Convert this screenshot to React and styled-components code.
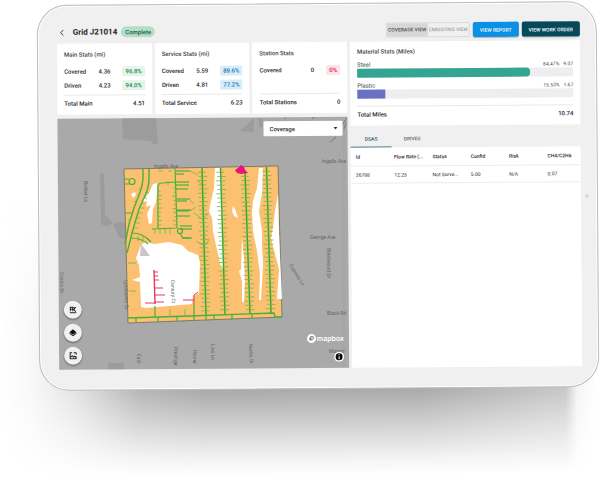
import React from "react";
import styled, { createGlobalStyle } from "styled-components";
import { ChevronLeft } from "lucide-react";

const GlobalStyle = createGlobalStyle`
  *, *::before, *::after { box-sizing: border-box; }
  body {
    margin: 0;
    background: #fff;
    color: #22262a;
    font-family: Roboto, "Liberation Sans", sans-serif;
    font-size: 6px;
    line-height: 8px;
    overflow: hidden;
  }
  button, select { font: inherit; color: inherit; margin: 0; }
  h1, h2, dl, dd { margin: 0; }
`;

const Stage = styled.div`
  padding: 3px 2px 97px 38px;
`;

const Device = styled.div`
  position: relative;
  transform: rotate(-0.4deg);
`;

const Shadow = styled.div`
  position: absolute;
  top: 50%;
  right: -2px;
  bottom: -86px;
  left: -38px;
  background: linear-gradient(to bottom, transparent 0, #a8a8a8 50%, #acacac 70%, #d4d4d4 83%, #f3f3f3 94%, #fff 100%);
  mask-image: linear-gradient(to right, transparent 0, rgba(0, 0, 0, 0.08) 5%, rgba(0, 0, 0, 0.3) 12%, rgba(0, 0, 0, 0.85) 23%, #000 34%, #000 70%, rgba(0, 0, 0, 0.65) 94%, rgba(0, 0, 0, 0.12) 96%, transparent 99%);
`;

const Screen = styled.main`
  position: relative;
  padding: 19px 16px 20px 19px;
  border: 1px solid #bcbcbc;
  border-radius: 30px;
  background: #f0f0f1;
  box-shadow: inset 0 0 0 1px #fff;
`;

const Camera = styled.span`
  position: absolute;
  top: 50%;
  right: 8px;
  width: 4px;
  height: 4px;
  border-radius: 50%;
  background: #d9d9db;
`;

const Header = styled.header`
  display: flex;
  align-items: center;
  gap: 4px;
  height: 15px;
  margin-bottom: 4px;
`;

const BackButton = styled.button`
  display: flex;
  padding: 0;
  border: 0;
  background: none;
  margin: 0 2px 0 0;
  svg { width: 10px; height: 10px; }
`;

const Title = styled.h1`
  font-size: 8px;
  line-height: 10px;
  font-weight: 700;
`;

const StatusChip = styled.span`
  padding: 0 4px;
  border-radius: 6px;
  background: #b4dfc6;
  color: #23543b;
  font-size: 6px;
  line-height: 11px;
  font-weight: 500;
`;

const Actions = styled.div`
  display: flex;
  gap: 3px;
  margin-left: auto;
`;

const Toggle = styled.div`
  display: flex;
  border: 1px solid #d9dadb;
  border-radius: 2px;
`;

const ToggleButton = styled.button`
  width: 41px;
  padding: 0;
  border: 0;
  background: ${(p) => (p.$on ? "#d6d7d8" : "transparent")};
  color: ${(p) => (p.$on ? "#4b4f52" : "#8b8e91")};
  font-size: 5px;
  line-height: 13px;
  font-weight: ${(p) => (p.$on ? 500 : 400)};
  white-space: nowrap;
`;

const ActionButton = styled.button`
  height: 15px;
  padding: 0 7px;
  border: 0;
  border-radius: 2px;
  background: ${(p) => (p.$dark ? "#06495a" : "#0a90e4")};
  color: #fff;
  font-size: 5px;
  font-weight: 500;
  box-shadow: 0 1px 1px rgba(0, 0, 0, 0.25);
  white-space: nowrap;
`;

const Columns = styled.div`
  display: grid;
  grid-template-columns: 290fr 230fr;
  gap: 3px;
`;

const LeftColumn = styled.div`
  display: flex;
  flex-direction: column;
  gap: 4px;
  min-width: 0;
`;

const RightColumn = styled.div`
  display: flex;
  flex-direction: column;
  min-width: 0;
`;

const StatsGrid = styled.div`
  display: grid;
  grid-template-columns: repeat(3, 1fr);
  gap: 3px;
`;

const Card = styled.section`
  padding: 7px;
  border-radius: 1px;
  background: #fff;
`;

const CardTitle = styled.h2`
  margin-bottom: ${(p) => p.$gap}px;
  color: #3d4246;
  font-size: 6px;
  line-height: 8px;
  font-weight: 500;
`;

const Rows = styled.dl`
  display: flex;
  flex-direction: column;
  gap: 4px;
  min-height: 24px;
`;

const Row = styled.div`
  display: flex;
  align-items: center;
  height: 10px;
  gap: 12px;
  dt { flex: 1; font-weight: 500; }
`;

const Value = styled.dd`
  font-weight: 500;
`;

const chipTones = {
  green: ["#e3f5e9", "#2a8550"],
  blue: ["#d6edfb", "#1f6d9c"],
  red: ["#fde3e8", "#d2264d"],
};

const Percent = styled.dd`
  padding: 0 3px;
  border-radius: 1px;
  background: ${(p) => chipTones[p.$tone][0]};
  color: ${(p) => chipTones[p.$tone][1]};
  line-height: 10px;
  font-weight: 500;
`;

const Total = styled.div`
  display: flex;
  justify-content: space-between;
  margin-top: ${(p) => p.$gap}px;
  padding-top: 4px;
  border-top: 1px solid #e8e9ea;
  font-weight: 500;
`;

const MaterialCard = styled(Card)`
  padding-top: 6px;
`;

const Material = styled.div`
  & + & { margin-top: 4px; }
`;

const MaterialLabel = styled.div`
  display: flex;
  gap: 4px;
  color: #44484c;
  font-size: 5px;
  span:first-child { flex: 1; font-size: 6px; }
`;

const Track = styled.div`
  height: 9px;
  background: #eeeef0;
`;

const Fill = styled.div`
  width: ${(p) => p.$width};
  height: 100%;
  border-radius: ${(p) => (p.$round ? "0 4px 4px 0" : "0")};
  background: ${(p) => p.$color};
`;

const Tabs = styled.div`
  display: flex;
  height: 22px;
`;

const Tab = styled.button`
  width: 41px;
  padding: 4px 0 0;
  border: 0;
  border-bottom: 1px solid ${(p) => (p.$on ? "#17646a" : "transparent")};
  background: none;
  color: ${(p) => (p.$on ? "#17646a" : "#64696d")};
  font-size: 5px;
  font-weight: 500;
`;

const TablePanel = styled.div`
  flex: 1;
  background: #fff;
`;

const Table = styled.table`
  width: 100%;
  table-layout: fixed;
  border-collapse: collapse;
  font-size: 5px;
  th, td {
    height: 17px;
    padding: 0 0 0 5px;
    border-bottom: 1px solid #ebeced;
    text-align: left;
    white-space: nowrap;
  }
  th { height: 18px; font-weight: 500; }
`;

const MapPanel = styled.section`
  position: relative;
  flex: 1;
  min-height: 251px;
  overflow: hidden;
  background: #a9a9a9;
`;

const MapDrawing = styled.svg`
  position: absolute;
  inset: 0;
  width: 100%;
  height: 100%;
`;

const LayerPicker = styled.label`
  position: absolute;
  top: 4px;
  right: 5px;
  width: 79px;
  select {
    display: block;
    width: 100%;
    height: 15px;
    padding: 0 6px;
    border: 0;
    border-radius: 1px;
    appearance: none;
    background: #fff;
    font-weight: 500;
  }
  svg {
    position: absolute;
    top: 6px;
    right: 5px;
    width: 4px;
    height: 3px;
    pointer-events: none;
  }
`;

const MapTools = styled.div`
  position: absolute;
  bottom: 5px;
  left: 5px;
  display: flex;
  flex-direction: column;
  gap: 5px;
`;

const MapTool = styled.button`
  display: grid;
  place-items: center;
  width: 18px;
  height: 18px;
  padding: 0;
  border: 0;
  border-radius: 50%;
  background: #f1f1f1;
  box-shadow: 0 1px 2px rgba(0, 0, 0, 0.45);
  svg { width: 8px; height: 8px; }
`;

const Attribution = styled.div`
  position: absolute;
  right: 5px;
  bottom: 6px;
  display: flex;
  flex-direction: column;
  align-items: flex-end;
  gap: 9px;
`;

const Logo = styled.a`
  display: flex;
  align-items: center;
  gap: 1px;
  color: #fff;
  font-family: Inter, sans-serif;
  font-size: 7px;
  line-height: 9px;
  font-weight: 600;
  text-decoration: none;
  svg { width: 9px; height: 9px; }
`;

const InfoButton = styled.button`
  display: flex;
  padding: 0;
  border: 0;
  background: none;
  svg { width: 10px; height: 10px; }
`;

/* Service lines branching off a main, evenly spaced along it. */
function ticks(x1, y1, x2, y2, step, left, right) {
  const n = Math.floor(Math.abs(y2 - y1) / step);
  let d = "";
  for (let i = 1; i < n; i++) {
    const t = i / n;
    const x = x1 + (x2 - x1) * t;
    const y = y1 + (y2 - y1) * t;
    const l = left ? left - (i % 3) * 0.7 : 0;
    const r = right ? right - ((i + 1) % 3) * 0.7 : 0;
    d += `M${x - l} ${y}H${x + r}`;
  }
  return d;
}

const mains = [
  [202, 167, 206, 314],
  [220.5, 167, 225, 313],
  [245, 171, 250, 313],
  [266.5, 166, 271, 312],
];

const gaps = [
  "M141 244l4-3 9 2 15-2 13 3 6 6 10 4 2 8-1 30-6 3-1 8-46 4-5-1-1-25-8-2 8-3-1-12-3-7z",
  "M153 183l4-1v9l-1 10-3 7-1 14-3 1-2-10 4-9-5 2 1-6-6 2 9-12z",
  "M131 193l4-2 1 3-3 3z",
  "M215 167h6l1 30 1 40v30h-2l-3-14-3-13-2-10-1-13-3-7 2-10 3-13z",
  "M233 205l2 3 3 9-4-2-2-5z",
  "M242 236l2 20 1 24-1 22-2-2 0-20-3-10 2-2z",
  "M259 167h4l-1 26-3 17 3 20 0 15 1 18-1 20-1 16h-2l1-26-3-23-4-20-1-17 1-13 4-13z",
  "M278 193l1 40 3 65h-5l2-30-3-11-5-20 2-11 2-16z",
];

const sideLines = [
  [176, 170, 14], [176, 173, 8], [176, 181, 13], [176, 184, 13], [176, 188, 12], [177, 198, 13],
  [177, 200, 10], [177, 209, 14], [177, 210, 12], [177, 215, 13], [180, 225, 12], [180, 228, 12], [182, 237, 10],
];

const labels = [
  ["Ingalls Ave", 154, 167, 0],
  ["Ingalls Ave", 322, 162, 0],
  ["George Ave", 310, 238, 0],
  ["Black Rd", 327, 314, 0],
  ["Maroni", 329, 352, 0],
  ["Barber Ln", 84, 180, 90],
  ["Brentwood Dr", 327, 247, 90],
  ["Cypress Ln", 289, 264, 58],
  ["Cassia Dr", 60, 271, 90],
  ["Lynnhaven Dr", 124, 279, 88],
  ["Fairl", 137, 353, 90],
  ["Prestige", 174, 346, 90],
  ["Home", 193, 349, 90],
  ["Lisa Ln", 211, 343, 90],
  ["Banks Dr", 249, 343, 88],
  ["Century Ct", 171, 279, 88],
];

function SurveyMap() {
  return (
    <MapDrawing viewBox="58 116 290 251" preserveAspectRatio="xMidYMid slice" role="img" aria-label="Coverage map">
      <g transform="rotate(0.4 318 196)">
        <g fill="#9c9c9c">
          <path d="M122 117h34l2 26h-5l-3-3-27-2z" />
          <path d="M100 172h4l1 42 8 8-7 4-5-3z" />
          <path d="M113 223l6-2 6 1v16l-6-2z" />
          <path d="M240 130l14-13v14z" />
          <path d="M108 362h16v8h-16z" />
          <path d="M258 117h4l1 8-3 3z" />
        </g>
        <path d="M344 115v255" stroke="#a3a3a3" fill="none" />
        <path d="M284 118l2-2M312 118l2-2M342 124l5-7M330 141l6-5M346 122l-2 6" stroke="#777" fill="none" />
        <path d="M124 168L278 165 282 316 128 322z" fill="#fbc070" stroke="#5b6358" strokeWidth="0.7" />
        {gaps.map((d) => <path key={d} d={d} fill="#fff" />)}
        <path d="M141 243l4 5 5 7-10 0z" fill="#ccc6cb" />
        <g fill="none" stroke="#45b13a" strokeWidth="1.2">
          {mains.map(([a, b, c, d]) => <path key={a} d={`M${a} ${b}L${c} ${d}`} stroke="#2ba52d" strokeWidth="1.4" />)}
          <path d="M128 317L190 315 274 312l1 4h7" strokeWidth="1.4" />
          <path d="M136 317v4M158 316v5M177 315v5M194 302v18M206 314v6M214 314v5M232 313v6M252 312v6" />
          <path d="M143 168v8q0 8-4 18l-5 13-5 16-4 20M149 168v10q0 8-4 17l-6 13-7 24-5 20" strokeWidth="1.4" />
          <path d="M124 178h5M124 183h5M124 212h9M132 232q11 0 19 9M131 237q10 0 17 6" />
          <circle cx="132" cy="180.500" r="3" />
          <path d="M158 228l0-42q0-4 4-4l14-1M175 167l2 60M152 228l25-1M155 305v11M180 233l3 4h7" />
          <circle cx="180" cy="230" r="2.500" />
        </g>
        <g fill="none" stroke="#6bba45" strokeWidth="0.8">
          {mains.map(([a, b, c, d]) => <path key={a} d={ticks(a, b, c, d, 4.2, 5, 5)} />)}
          <path d={ticks(158, 186, 158, 228, 4, 0, 4)} />
          <path d={ticks(176, 183, 177, 228, 4, 4, 0)} />
          <path d={ticks(148, 182, 133, 232, 5, 0, 4)} />
          <path d={ticks(143, 182, 129, 225, 6, 3, 0)} />
          <path d="M128 262h8M129 290h7M155 228v5M160 228v5M165 228v5M170 228v5M138 235v5M143 236v5M168 180v4M168 170h4M158 170h5" />
          <path d="M170 308v8M185 308v8M190 199l4 4M190 210l6-4M190 170l8 4M198 180l4 4M194 212l8 6 6-5M196 240l8 5 5-6" />
        </g>
        <g fill="none" stroke="#27ad33" strokeWidth="1.200">
          {sideLines.map(([x, y, w]) => <path key={`${x}-${y}`} d={`M${x} ${y}h${w}`} />)}
        </g>
        <g fill="none" stroke="#e23a63" strokeWidth="1">
          <path d="M154 269l1 34" strokeWidth="1.400" />
          <path d="M154 271h4M154 275h4M154 279h5M155 287h8M155 294h10M155 301h9M145 302h10M183 299h11M194 302v-8l4-3" />
        </g>
        <path d="M235 169l3-2 3-3 3 2 1 3 3 3-7 1-4-1z" fill="#e7147c" />
        <g fill="#666" fontFamily="Roboto, sans-serif" fontSize="5">
          {labels.map(([text, x, y, r]) => (
            <text key={`${text}${x}`} transform={`translate(${x} ${y}) rotate(${r})`}>{text}</text>
          ))}
        </g>
      </g>
    </MapDrawing>
  );
}

const stats = [
  { title: "Main Stats (mi)", tone: "green", rows: [["Covered", "4.36", "96.8%"], ["Driven", "4.23", "94.0%"]], total: ["Total Main", "4.51"] },
  { title: "Service Stats (mi)", tone: "blue", rows: [["Covered", "5.59", "89.6%"], ["Driven", "4.81", "77.2%"]], total: ["Total Service", "6.23"] },
  { title: "Station Stats", tone: "red", rows: [["Covered", "0", "0%"]], total: ["Total Stations", "0"] },
];

const materials = [
  { name: "Steel", percent: "84.47%", miles: "9.07", width: "80%", color: "#35a593", round: true },
  { name: "Plastic", percent: "15.53%", miles: "1.67", width: "13%", color: "#6a70c4" },
];

const headings = ["Id", "Flow Rate (...", "Status", "Confid", "Risk", "CH4/C2H6"];
const reading = ["36788", "12.25", "Not Surve...", "5.00", "N/A", "0.07"];

export default function App() {
  return (
    <Stage>
      <GlobalStyle />
      <Device>
        <Shadow />
        <Screen>
          <Header>
            <BackButton aria-label="Back"><ChevronLeft strokeWidth={2} /></BackButton>
            <Title>Grid J21014</Title>
            <StatusChip>Complete</StatusChip>
            <Actions>
              <Toggle>
                <ToggleButton $on aria-pressed="true">COVERAGE VIEW</ToggleButton>
                <ToggleButton aria-pressed="false">EMISSIONS VIEW</ToggleButton>
              </Toggle>
              <ActionButton>VIEW REPORT</ActionButton>
              <ActionButton $dark>VIEW WORK ORDER</ActionButton>
            </Actions>
          </Header>
          <Columns>
            <LeftColumn>
              <StatsGrid>
                {stats.map((s) => (
                  <Card key={s.title}>
                    <CardTitle $gap={8}>{s.title}</CardTitle>
                    <Rows>
                      {s.rows.map(([name, value, percent]) => (
                        <Row key={name}>
                          <dt>{name}</dt>
                          <Value>{value}</Value>
                          <Percent $tone={s.tone}>{percent}</Percent>
                        </Row>
                      ))}
                    </Rows>
                    <Total $gap={4}><span>{s.total[0]}</span><span>{s.total[1]}</span></Total>
                  </Card>
                ))}
              </StatsGrid>
              <MapPanel>
                <SurveyMap />
                <LayerPicker>
                  <select aria-label="Map layer" defaultValue="Coverage"><option>Coverage</option></select>
                  <svg viewBox="0 0 4 3"><path d="M0 0h4L2 2.500z" fill="#333" /></svg>
                </LayerPicker>
                <MapTools>
                  <MapTool aria-label="Routes">
                    <svg viewBox="0 0 16 16" fill="none" stroke="#222" strokeWidth="2"><path d="M2 14h13M3 11V3h5v8M3 7h5M8 4h5l-3 4 4 4" /></svg>
                  </MapTool>
                  <MapTool aria-label="Layers">
                    <svg viewBox="0 0 16 16" fill="#111"><path d="M8 1l7 6-7 5-7-5z" /><path d="M1 10l7 5 7-5v-2l-7 5-7-5z" /></svg>
                  </MapTool>
                  <MapTool aria-label="Image overlay">
                    <svg viewBox="0 0 16 16" fill="none" stroke="#222" strokeWidth="2"><path d="M6 2H2v12h12V9M9 2h5v4M2 12l4-4 3 3 2-2 3 3M2 7V2" /></svg>
                  </MapTool>
                </MapTools>
                <Attribution>
                  <Logo href="#mapbox">
                    <svg viewBox="0 0 18 18"><circle cx="9" cy="9" r="9" fill="#fff" /><path d="M5 13c-1-6 1-9 5-9 3 0 5 3 3 6s-5 3-8 3z" fill="#777" /><path d="M10 5l1 2 2 1-2 1-1 2-1-2-2-1 2-1z" fill="#fff" /></svg>
                    mapbox
                  </Logo>
                  <InfoButton aria-label="Map information">
                    <svg viewBox="0 0 20 20"><circle cx="10" cy="10" r="10" fill="#fff" /><circle cx="10" cy="10" r="7" fill="#080808" /><path d="M10 5v2M10 9v6" stroke="#fff" strokeWidth="2" /></svg>
                  </InfoButton>
                </Attribution>
              </MapPanel>
            </LeftColumn>
            <RightColumn>
              <MaterialCard>
                <CardTitle $gap={5}>Material Stats (Miles)</CardTitle>
                {materials.map((m) => (
                  <Material key={m.name}>
                    <MaterialLabel><span>{m.name}</span><span>{m.percent}</span><span>{m.miles}</span></MaterialLabel>
                    <Track><Fill $width={m.width} $color={m.color} $round={m.round} /></Track>
                  </Material>
                ))}
                <Total $gap={7}><span>Total Miles</span><span>10.74</span></Total>
              </MaterialCard>
              <Tabs role="tablist">
                <Tab role="tab" aria-selected="true" $on>DSAS</Tab>
                <Tab role="tab" aria-selected="false">DRIVES</Tab>
              </Tabs>
              <TablePanel>
                <Table>
                  <thead><tr>{headings.map((h) => <th key={h}>{h}</th>)}</tr></thead>
                  <tbody><tr>{reading.map((c) => <td key={c}>{c}</td>)}</tr></tbody>
                </Table>
              </TablePanel>
            </RightColumn>
          </Columns>
          <Camera />
        </Screen>
      </Device>
    </Stage>
  );
}
